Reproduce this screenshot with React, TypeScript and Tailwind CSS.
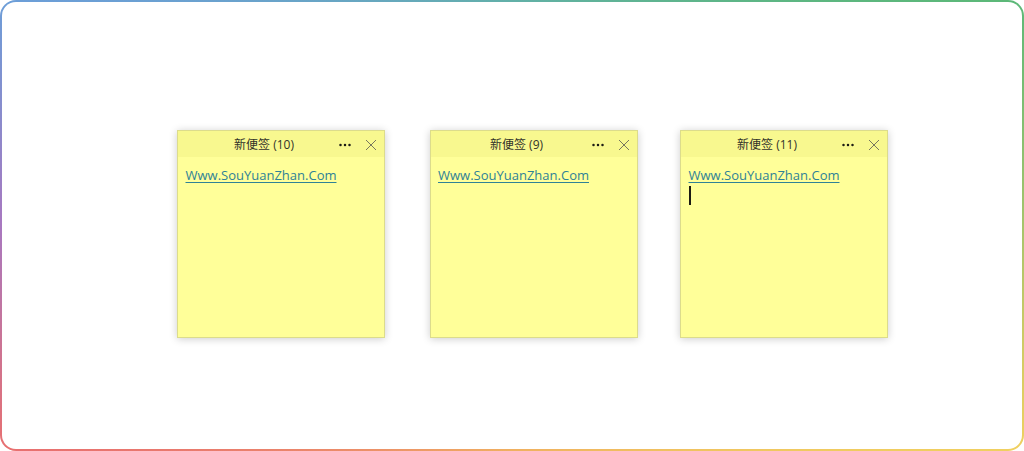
const notes = [
  { title: "新便签 (10)", gap: "" },
  { title: "新便签 (9)", gap: "ml-[44.5px]" },
  { title: "新便签 (11)", gap: "ml-[42.5px]", caret: true },
];

function Note({ title, gap, caret }: { title: string; gap: string; caret?: boolean }) {
  return (
    <div className={`${gap} flex h-[208px] w-[208px] flex-col border border-[#dcdc8c] bg-[#ffff99] shadow-[0_1px_8px_rgba(0,0,0,0.2)]`}>
      <div className="flex h-[26px] shrink-0 items-center bg-[#f8f88f] pt-[1px]">
        <div className="ml-[11px] w-[150px] whitespace-nowrap text-center text-[12px] text-[#33332a]">{title}</div>
        <svg width="14" height="14" viewBox="0 0 14 14" fill="#1c1c14" className="ml-[-1px]">
          <circle cx="2.5" cy="7" r="1.25" />
          <circle cx="7" cy="7" r="1.25" />
          <circle cx="11.5" cy="7" r="1.25" />
        </svg>
        <svg className="ml-[13px] mr-[7px]" width="12" height="12" viewBox="0 0 12 12" stroke="#77775e" strokeWidth="1" fill="none">
          <path d="M1 1 L11 11 M11 1 L1 11" />
        </svg>
      </div>
      <div className="px-[7.5px] pt-[9px] text-[13px] leading-[19px] text-[#2f8296]">
        <span className="underline underline-offset-2">Www.SouYuanZhan.Com</span>
        {caret && <div className="mt-[1px] h-[19px] w-[2px] bg-[#1c1c14]" />}
      </div>
    </div>
  );
}

export default function App() {
  return (
    <div className="h-[451px] w-[1024px] overflow-hidden rounded-[16px] bg-[conic-gradient(#62b0a8_0deg,#5cb878_66deg,#f0d060_114deg,#f0b060_180deg,#e87070_246deg,#a878c0_270deg,#6c9ed8_294deg,#62b0a8_360deg)] p-[2px] font-['Open_Sans','Noto_Sans_CJK_SC',sans-serif]">
      <div className="flex h-full items-start rounded-[14px] bg-white pl-[175px] pt-[128px]">
        {notes.map((n) => (
          <Note key={n.title} title={n.title} gap={n.gap} caret={n.caret} />
        ))}
      </div>
    </div>
  );
}
